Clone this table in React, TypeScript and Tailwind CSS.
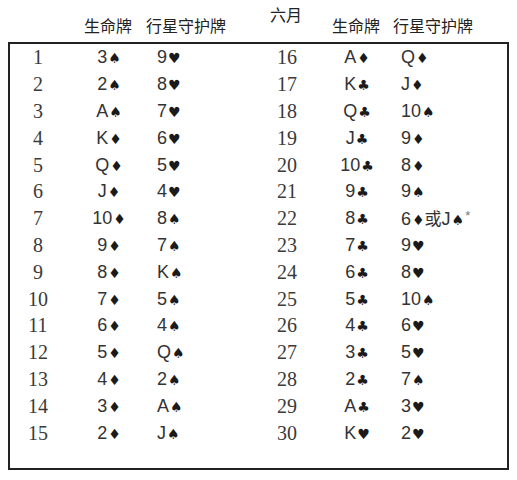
import React from "react";

const left: [number, string, string][] = [
  [1, "3♠", "9♥"],
  [2, "2♠", "8♥"],
  [3, "A♠", "7♥"],
  [4, "K♦", "6♥"],
  [5, "Q♦", "5♥"],
  [6, "J♦", "4♥"],
  [7, "10♦", "8♠"],
  [8, "9♦", "7♠"],
  [9, "8♦", "K♠"],
  [10, "7♦", "5♠"],
  [11, "6♦", "4♠"],
  [12, "5♦", "Q♠"],
  [13, "4♦", "2♠"],
  [14, "3♦", "A♠"],
  [15, "2♦", "J♠"],
];

const right: [number, string, string][] = [
  [16, "A♦", "Q♦"],
  [17, "K♣", "J♦"],
  [18, "Q♣", "10♠"],
  [19, "J♣", "9♦"],
  [20, "10♣", "8♦"],
  [21, "9♣", "9♠"],
  [22, "8♣", "SPECIAL"],
  [23, "7♣", "9♥"],
  [24, "6♣", "8♥"],
  [25, "5♣", "10♠"],
  [26, "4♣", "6♥"],
  [27, "3♣", "5♥"],
  [28, "2♣", "7♠"],
  [29, "A♣", "3♥"],
  [30, "K♥", "2♥"],
];

function Suit({ s }: { s: string }) {
  return (
    <span className="font-['DejaVu_Sans',sans-serif] text-[14px] ml-[1px] text-[#1a1a1a]">{s}</span>
  );
}

function CardText({ c }: { c: string }) {
  if (c === "SPECIAL") {
    return (
      <span className="whitespace-nowrap">
        6<Suit s="♦" />
        <span className="font-['Noto_Sans_CJK_SC',sans-serif] text-[17px]">或</span>J
        <Suit s="♠" />
        <span className="text-[13px] text-[#777] align-[5px] ml-[1px]">*</span>
      </span>
    );
  }
  const s = c.slice(-1);
  const r = c.slice(0, -1);
  return (
    <span className="whitespace-nowrap">
      {r}
      <Suit s={s} />
    </span>
  );
}

function Row({ n, a, b, right }: { n: number; a: string; b: string; right?: boolean }) {
  return (
    <div className="flex h-[26.8px] items-center">
      <div
        className={
          (right ? "w-[58px]" : "w-[56px]") +
          " text-center font-['Liberation_Serif',serif] text-[20px] leading-none text-[#3a3a3a]"
        }
      >
        {n}
      </div>
      <div className={(right ? "w-[82px]" : "w-[86px]") + " text-center text-[18px] leading-none"}>
        <CardText c={a} />
      </div>
      <div className={(right ? "pl-[3px] w-[109px]" : "pl-[5px] w-[106px]") + " text-[18px] leading-none"}>
        <CardText c={b} />
      </div>
    </div>
  );
}

export default function App() {
  return (
    <div className="w-[517px] h-[480px] bg-white text-[#333] font-['Liberation_Sans',Arial,sans-serif]">
      <div className="h-[42px] font-['Noto_Sans_CJK_SC',sans-serif] text-[16px] leading-[16px] text-[#222]">
        <div className="pt-[6px] pl-[270px]">六月</div>
        <div className="flex pl-[84px] mt-[-5px]">
          <span>生命牌</span>
          <span className="ml-[14px]">行星守护牌</span>
          <span className="ml-[106px]">生命牌</span>
          <span className="ml-[13px]">行星守护牌</span>
        </div>
      </div>
      <div className="ml-[8px] w-[501px] h-[428px] border-2 border-[#222] flex">
        <div className="flex flex-col w-[248px]">
          {left.map(([n, a, b]) => (
            <Row key={n} n={n} a={a} b={b} />
          ))}
        </div>
        <div className="flex flex-col">
          {right.map(([n, a, b]) => (
            <Row key={n} n={n} a={a} b={b} right />
          ))}
        </div>
      </div>
    </div>
  );
}
